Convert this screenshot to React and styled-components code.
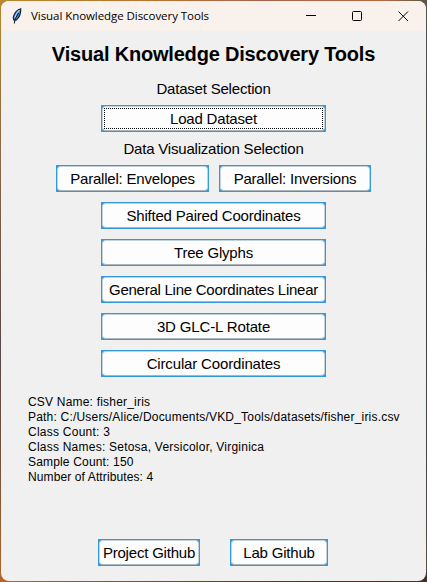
import React from "react";
import styled, { createGlobalStyle } from "styled-components";

const GlobalStyle = createGlobalStyle`
  * { box-sizing: border-box; }
  html, body { margin: 0; height: 100%; }
  body { overflow: hidden; font-family: "Liberation Sans", Arial, sans-serif; color: #000; }
`;

const Desktop = styled.div`
  width: 427px;
  height: 582px;
  padding: 1px;
  background:
    linear-gradient(90deg, #b8862c 0, #b97332 35%, #a8634c 60%, #b5683f 90%, #5a5545 100%) top / 100% 10px no-repeat,
    linear-gradient(90deg, #b5652a 0, #7d3e2c 45%, #5b2c24 75%, #40302c 100%) bottom / 100% 10px no-repeat,
    linear-gradient(180deg, #b8862c 0, #8c6a45 25%, #57484a 60%, #75533a 80%, #b5652a 100%) left / 10px 100% no-repeat,
    linear-gradient(180deg, #5a5545 0, #34413c 35%, #3d453f 70%, #5e4939 100%) right / 10px 100% no-repeat;
`;

const Window = styled.main`
  display: flex;
  flex-direction: column;
  width: 425px;
  height: 580px;
  border-radius: 8px;
  overflow: hidden;
  background: #f0f0f0;
`;

const TitleBar = styled.header`
  display: flex;
  align-items: center;
  height: 30px;
  flex: none;
  padding-left: 10px;
  background: #f9f1ec;
`;

const Caption = styled.span`
  flex: 1;
  margin-left: 8px;
  font: 11.5px/16px "Open Sans", "Noto Sans", sans-serif;
  letter-spacing: ${(p) => p.$spacing}px;
  white-space: nowrap;
`;

const WindowControls = styled.div`
  display: flex;
`;

const Control = styled.span`
  display: flex;
  align-items: center;
  justify-content: center;
  width: 46px;
  height: 30px;
`;

const Content = styled.section`
  flex: 1;
  display: flex;
  flex-direction: column;
  align-items: center;
  padding-top: 10px;
`;

const Heading = styled.h1`
  margin: 0;
  font-size: 20px;
  line-height: 26px;
  font-weight: bold;
  letter-spacing: ${(p) => p.$spacing}px;
  white-space: nowrap;
`;

const SectionLabel = styled.div`
  height: 18px;
  margin-top: ${(p) => p.$top}px;
  font-size: 15px;
  line-height: 18px;
  letter-spacing: ${(p) => p.$spacing}px;
  white-space: nowrap;
`;

const ButtonRow = styled.div`
  display: flex;
  gap: ${(p) => p.$gap || 0}px;
  margin-top: ${(p) => p.$top}px;
`;

const ButtonStack = styled.div`
  display: flex;
  flex-direction: column;
  gap: 10px;
  margin-top: 10px;
`;

const Frame = styled.button`
  display: block;
  width: ${(p) => p.$width}px;
  height: 27px;
  padding: 0;
  border: 1px solid #3498db;
  background: #3498db;
  outline: none;
`;

const Face = styled.span`
  display: flex;
  height: 25px;
  padding: 1px;
  border: 1px solid #c2d3e0;
  border-bottom-color: #a9b6c0;
  border-radius: 4px;
  background: #fdfdfd;
`;

const ButtonText = styled.span`
  flex: 1;
  display: flex;
  align-items: center;
  justify-content: center;
  border: 1px dotted ${(p) => (p.$focused ? "#000" : "transparent")};
  font: 15px/17px "Liberation Sans", Arial, sans-serif;
  letter-spacing: ${(p) => p.$spacing}px;
  color: #000;
  white-space: nowrap;
`;

const Details = styled.div`
  align-self: stretch;
  margin: 18px 0 0 27px;
  font-size: 12px;
  line-height: 15px;
  white-space: nowrap;
`;

const DetailLine = styled.div`
  letter-spacing: ${(p) => p.$spacing}px;
`;

const Footer = styled.footer`
  display: flex;
  gap: 30px;
  padding: 0 0 15px 97px;
`;

function Button({ label, width = 225, spacing = -0.2, focused }) {
  return (
    <Frame $width={width}>
      <Face>
        <ButtonText $focused={focused} $spacing={spacing}>{label}</ButtonText>
      </Face>
    </Frame>
  );
}

function Feather() {
  return (
    <svg width="12" height="16" viewBox="0 0 12 16">
      <path d="M9.8.8C6.6 1.3 3 5 2.2 9.6L2.8 12 5 12.2C8 10 10 6.5 9.8.8Z" fill="#4385d2" stroke="#171b24" strokeWidth="1.1" />
      <path d="M8.4 2.2C5.7 4.5 4.5 7.5 3.8 10.5" fill="none" stroke="#a9d2f5" strokeWidth="1.1" />
      <path d="M7.5 5 4.2 11 3.3 15.5" fill="none" stroke="#111" strokeWidth="1" />
    </svg>
  );
}

const tools = [
  ["Shifted Paired Coordinates", -0.2],
  ["Tree Glyphs", -0.2],
  ["General Line Coordinates Linear", -0.25],
  ["3D GLC-L Rotate", -0.14],
  ["Circular Coordinates", -0.15],
];

const details = [
  ["CSV Name: fisher_iris", 0.2],
  ["Path: C:/Users/Alice/Documents/VKD_Tools/datasets/fisher_iris.csv", 0.2],
  ["Class Count: 3", 0.25],
  ["Class Names: Setosa, Versicolor, Virginica", 0.23],
  ["Sample Count: 150", 0.17],
  ["Number of Attributes: 4", 0.11],
];

export default function App() {
  return (
    <Desktop>
      <GlobalStyle />
      <Window>
        <TitleBar>
          <Feather />
          <Caption $spacing={-0.06}>Visual Knowledge Discovery Tools</Caption>
          <WindowControls>
            <Control>
              <svg width="11" height="11"><path d="M0 4.5H10" stroke="#000" /></svg>
            </Control>
            <Control>
              <svg width="11" height="11"><rect x=".5" y=".5" width="9" height="9" rx="1" fill="none" stroke="#000" /></svg>
            </Control>
            <Control>
              <svg width="11" height="11"><path d="M.5.5 10 10M10 .5.5 10" stroke="#000" /></svg>
            </Control>
          </WindowControls>
        </TitleBar>
        <Content>
          <Heading $spacing={-0.19}>Visual Knowledge Discovery Tools</Heading>
          <SectionLabel $top={13} $spacing={-0.2}>Dataset Selection</SectionLabel>
          <ButtonRow $top={7}>
            <Button label="Load Dataset" focused />
          </ButtonRow>
          <SectionLabel $top={8} $spacing={-0.2}>Data Visualization Selection</SectionLabel>
          <ButtonRow $top={7} $gap={10}>
            <Button label="Parallel: Envelopes" width={153} />
            <Button label="Parallel: Inversions" width={152} />
          </ButtonRow>
          <ButtonStack>
            {tools.map(([label, spacing]) => <Button key={label} label={label} spacing={spacing} />)}
          </ButtonStack>
          <Details>
            {details.map(([text, spacing]) => <DetailLine key={text} $spacing={spacing}>{text}</DetailLine>)}
          </Details>
        </Content>
        <Footer>
          <Button label="Project Github" width={102} />
          <Button label="Lab Github" width={98} />
        </Footer>
      </Window>
    </Desktop>
  );
}
